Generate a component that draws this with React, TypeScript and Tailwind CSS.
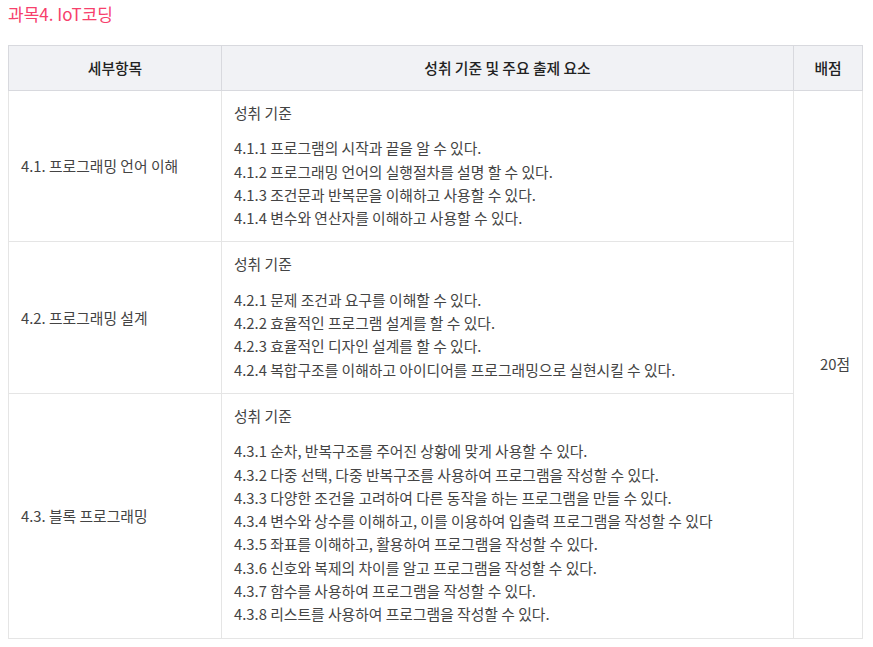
const sections = [
  {
    name: "4.1. 프로그래밍 언어 이해",
    items: [
      "4.1.1 프로그램의 시작과 끝을 알 수 있다.",
      "4.1.2 프로그래밍 언어의 실행절차를 설명 할 수 있다.",
      "4.1.3 조건문과 반복문을 이해하고 사용할 수 있다.",
      "4.1.4 변수와 연산자를 이해하고 사용할 수 있다.",
    ],
  },
  {
    name: "4.2. 프로그래밍 설계",
    items: [
      "4.2.1 문제 조건과 요구를 이해할 수 있다.",
      "4.2.2 효율적인 프로그램 설계를 할 수 있다.",
      "4.2.3 효율적인 디자인 설계를 할 수 있다.",
      "4.2.4 복합구조를 이해하고 아이디어를 프로그래밍으로 실현시킬 수 있다.",
    ],
  },
  {
    name: "4.3. 블록 프로그래밍",
    items: [
      "4.3.1 순차, 반복구조를 주어진 상황에 맞게 사용할 수 있다.",
      "4.3.2 다중 선택, 다중 반복구조를 사용하여 프로그램을 작성할 수 있다.",
      "4.3.3 다양한 조건을 고려하여 다른 동작을 하는 프로그램을 만들 수 있다.",
      "4.3.4 변수와 상수를 이해하고, 이를 이용하여 입출력 프로그램을 작성할 수 있다",
      "4.3.5 좌표를 이해하고, 활용하여 프로그램을 작성할 수 있다.",
      "4.3.6 신호와 복제의 차이를 알고 프로그램을 작성할 수 있다.",
      "4.3.7 함수를 사용하여 프로그램을 작성할 수 있다.",
      "4.3.8 리스트를 사용하여 프로그램을 작성할 수 있다.",
    ],
  },
];

export default function App() {
  return (
    <div
      className="bg-white px-2 pt-[2px] text-[#444]"
      style={{ fontFamily: '"Noto Sans CJK KR", "Noto Sans", sans-serif' }}
    >
      <h2 className="text-[17px] leading-6 text-[#f7406c]">과목4. IoT코딩</h2>
      <table className="mt-[19px] w-[855px] table-fixed border-collapse text-[14.8px]">
        <colgroup>
          <col className="w-[213px]" />
          <col className="w-[572px]" />
          <col />
        </colgroup>
        <thead>
          <tr className="h-[45px] bg-[#f1f2f5] text-[#222] font-medium">
            <th className="border border-[#d8d9de] font-medium">세부항목</th>
            <th className="border border-[#d8d9de] font-medium">성취 기준 및 주요 출제 요소</th>
            <th className="border border-[#d8d9de] font-medium">배점</th>
          </tr>
        </thead>
        <tbody>
          {sections.map((s, i) => (
            <tr key={s.name}>
              <td className="border border-[#e5e5e5] px-[12px] align-middle">{s.name}</td>
              <td className="border border-[#e5e5e5] px-[12px] pt-[10px] pb-[12px] leading-[23.3px]">
                <p>성취 기준</p>
                <div className="mt-[12px]">
                  {s.items.map((it) => (
                    <p key={it}>{it}</p>
                  ))}
                </div>
              </td>
              {i === 0 && (
                <td
                  rowSpan={3}
                  className="border border-[#e5e5e5] pl-[14px] text-center align-middle"
                >
                  20점
                </td>
              )}
            </tr>
          ))}
        </tbody>
      </table>
    </div>
  );
}
